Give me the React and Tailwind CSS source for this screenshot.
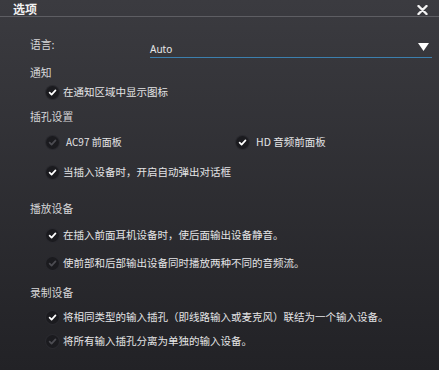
import React from "react";

function Check({ on }) {
  return (
    <span className="flex h-[13px] w-[13px] shrink-0 items-center justify-center rounded-full bg-[#1b1b1f] shadow-[0_0_0_1px_#2a2a2f]">
      <svg width="9" height="9" viewBox="0 0 10 10">
        <path
          d="M1.8 5.2 L4 7.4 L8.3 2.6"
          fill="none"
          stroke={on ? "#ffffff" : "#4c4c52"}
          strokeWidth="1.9"
          strokeLinecap="round"
          strokeLinejoin="round"
        />
      </svg>
    </span>
  );
}

function Item({ on, children, className = "", gap = "gap-[4px]" }) {
  return (
    <div className={`flex h-[20px] items-center ${gap} pl-[16px] ${className}`}>
      <Check on={on} />
      <span className="text-[10.5px] leading-[20px] text-[#e4e4e6]">{children}</span>
    </div>
  );
}

function Label({ children, className = "" }) {
  return (
    <div className={`h-[20px] text-[10.8px] leading-[20px] text-[#d6d6d8] ${className}`}>{children}</div>
  );
}

export default function App() {
  return (
    <div
      className="h-[370px] w-[439px] overflow-hidden bg-gradient-to-b from-[#3b3b40] to-[#222226] text-white"
      style={{ fontFamily: '"Noto Sans CJK SC", "Noto Sans", sans-serif' }}
    >
      <div className="flex h-[17px] items-end justify-between border-b border-[#5e5e63] pl-[13px] pr-[11px]">
        <span className="text-[12px] font-bold leading-[14px] text-[#f2f2f2]">选项</span>
        <svg width="11" height="10" viewBox="0 0 11 10" className="mb-[1px]">
          <path d="M1.5 1 L9.5 9 M9.5 1 L1.5 9" stroke="#f4f4f4" strokeWidth="2.4" strokeLinecap="round" />
        </svg>
      </div>
      <div className="pl-[30px]">
        <div className="mt-[17px] flex items-start">
          <Label className="w-[120px]">语言:</Label>
          <div className="relative h-[24px] w-[282px] border-b-[1.5px] border-[#3c7fae] pt-[8px]">
            <span className="block text-[10px] leading-[14px] text-[#e8e8e8]" style={{ fontFamily: '"Noto Sans", sans-serif' }}>
              Auto
            </span>
            <svg width="11" height="8" viewBox="0 0 11 8" className="absolute right-[3px] top-[9px]">
              <path d="M0 0 L11 0 L5.5 8 Z" fill="#ffffff" />
            </svg>
          </div>
        </div>
        <Label className="mt-[4px]">通知</Label>
        <Item on>在通知区域中显示图标</Item>
        <Label className="mt-[4px]">插孔设置</Label>
        <div className="mt-[6px] flex">
          <div className="w-[190px]">
            <Item on={false} gap="gap-[7px]">
              <span className="text-[10px]">AC97 前面板</span>
            </Item>
          </div>
          <Item on gap="gap-[7px]">
            <span className="text-[10.5px]">HD 音频前面板</span>
          </Item>
        </div>
        <Item on className="mt-[10px]">当插入设备时，开启自动弹出对话框</Item>
        <Label className="mt-[16px]">播放设备</Label>
        <Item on className="mt-[7px]">在插入前面耳机设备时，使后面输出设备静音。</Item>
        <Item on={false} className="mt-[8px]">使前部和后部输出设备同时播放两种不同的音频流。</Item>
        <Label className="mt-[9px]">录制设备</Label>
        <Item on className="mt-[5px]">将相同类型的输入插孔（即线路输入或麦克风）联结为一个输入设备。</Item>
        <Item on={false} className="mt-[4px]">将所有输入插孔分离为单独的输入设备。</Item>
      </div>
    </div>
  );
}
